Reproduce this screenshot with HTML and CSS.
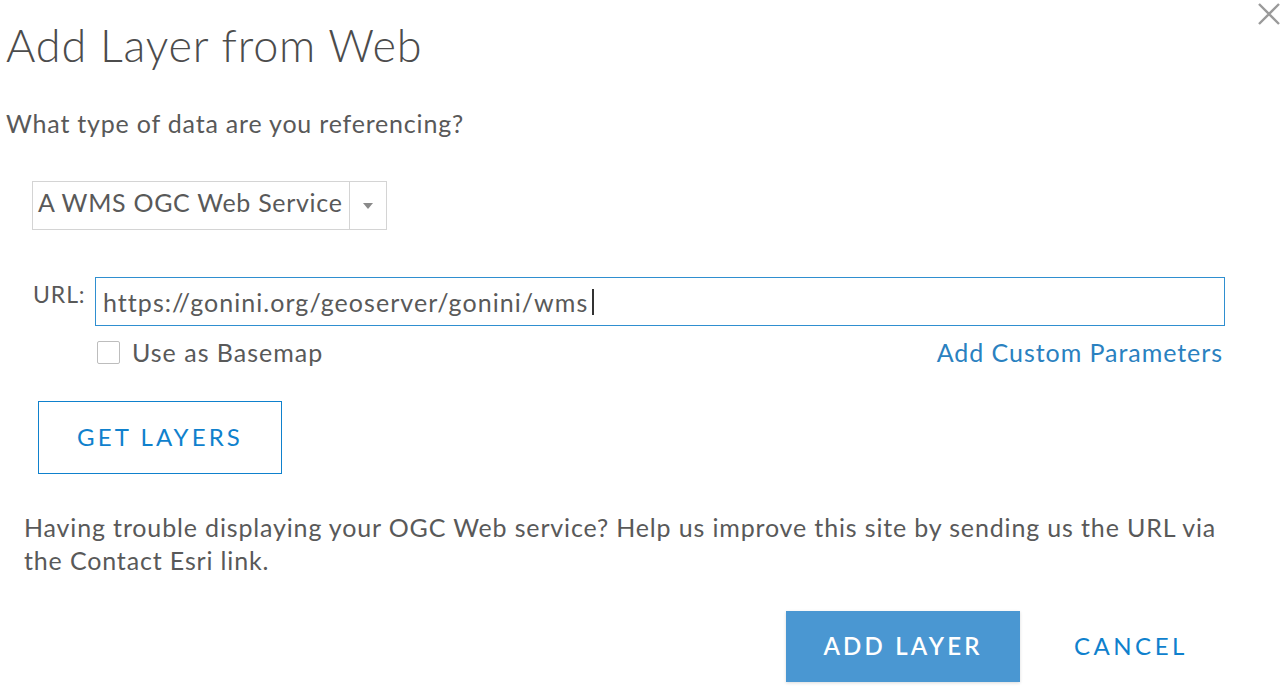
FILE: index.html
```html
<!DOCTYPE html>
<html>
<head>
<meta charset="utf-8">
<link rel="stylesheet" href="styles.css">
</head>
<body>
<div class="dialog">
  <button class="close" aria-label="Close">
    <svg width="26" height="26" viewBox="0 0 26 26"><path d="M3 3 L23 23 M23 3 L3 23" stroke="#9a9a9a" stroke-width="2.4" fill="none"/></svg>
  </button>
  <h1 class="title">Add Layer from Web</h1>
  <p class="question">What type of data are you referencing?</p>
  <div class="select">
    <span class="select-text">A WMS OGC Web Service</span>
    <span class="select-arrow"><svg width="12" height="8" viewBox="0 0 12 8"><path d="M1 1 L11 1 L6 7 Z" fill="#8a8a8a"/></svg></span>
  </div>
  <div class="url-row">
    <label class="url-label">URL:</label>
    <div class="url-col">
      <div class="url-input"><span>https://gonini.org/geoserver/gonini/wms</span><span class="caret"></span></div>
      <div class="url-options">
        <label class="check"><span class="box"></span>Use as Basemap</label>
        <a class="link">Add Custom Parameters</a>
      </div>
    </div>
  </div>
  <button class="btn-outline">GET LAYERS</button>
  <p class="help">Having trouble displaying your OGC Web service? Help us improve this site by sending us the URL via the Contact Esri link.</p>
  <div class="footer">
    <button class="btn-primary">ADD LAYER</button>
    <button class="btn-text">CANCEL</button>
  </div>
</div>
</body>
</html>
```
FILE: styles.css
```css
* { box-sizing: border-box; }
html, body { margin: 0; padding: 0; background: #fff; }
body { font-family: Lato, "Noto Sans", sans-serif; color: #595959; font-size: 25px; letter-spacing: 0.9px; }
.dialog { position: relative; width: 1288px; height: 696px; padding: 0 0 0 6px; }
.close { position: absolute; top: 1px; right: 6px; border: 0; background: none; padding: 0; }
.title { margin: 0; padding-top: 21px; font-size: 45px; font-weight: 300; color: #4c4c4c; line-height: 48px; letter-spacing: 0.8px; }
.question { margin: 40px 0 0; font-size: 25px; line-height: 28px; letter-spacing: 0.8px; }
.select { margin: 44px 0 0 26px; width: 355px; height: 49px; border: 1px solid #d4d4d4; display: flex; align-items: stretch; }
.select-text { flex: 1; font-size: 25px; line-height: 41px; padding-left: 5px; letter-spacing: 0.7px; }
.select-arrow { width: 37px; border-left: 1px solid #d4d4d4; display: flex; align-items: center; justify-content: center; }
.url-row { display: flex; margin: 47px 0 0 27px; }
.url-label { font-size: 23px; line-height: 22px; padding-top: 6px; width: 62px; letter-spacing: 0.9px; }
.url-col { width: 1130px; }
.url-input { height: 49px; border: 1px solid #2f8fd0; font-size: 25px; line-height: 30px; display: flex; align-items: center; padding-left: 7px; letter-spacing: 1.05px; }
.caret { display: inline-block; width: 2px; height: 26px; background: #333; margin-left: 4px; }
.url-options { display: flex; justify-content: space-between; align-items: center; margin-top: 11px; padding-right: 2px; line-height: 30px; }
.check { display: flex; align-items: center; letter-spacing: 1px; }
.box { width: 23px; height: 23px; border: 1.5px solid #bdbdbd; border-radius: 2px; margin: 0 12px 0 2px; }
.link { color: #2a81c0; letter-spacing: 0.95px; }
.btn-outline { display: block; margin: 34px 0 0 32px; width: 244px; height: 73px; border: 1.5px solid #0f81cd; background: #fff; color: #0f81cd; font-family: inherit; font-size: 24px; letter-spacing: 3.1px; padding: 0 0 2px 0; }
.help { margin: 37px 0 0 18px; width: 1230px; font-size: 25px; line-height: 33px; letter-spacing: 0.85px; }
.footer { display: flex; margin: 34px 0 0 780px; align-items: center; }
.btn-primary { width: 234px; height: 71px; border: 0; background: #4a97d2; color: #fff; font-family: inherit; font-size: 24px; font-weight: 600; letter-spacing: 3.2px; padding: 0 0 3px 0; box-shadow: 0 1px 3px rgba(0,0,0,0.15); }
.btn-text { margin-left: 54px; border: 0; background: none; color: #0f81cd; font-family: inherit; font-size: 24px; letter-spacing: 3.5px; padding: 0 0 3px 0; }
```
